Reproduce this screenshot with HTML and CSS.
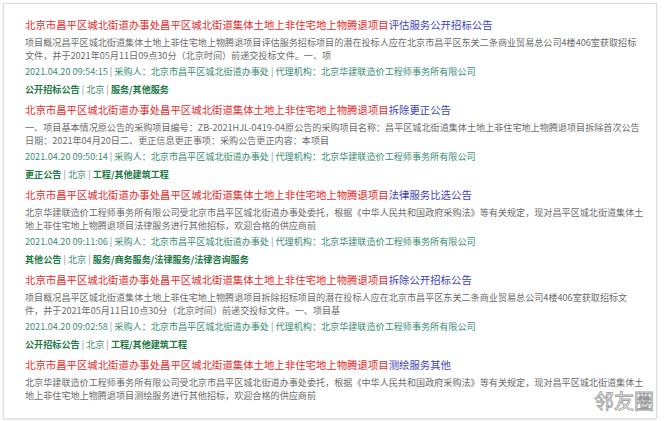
FILE: index.html
```html
<!DOCTYPE html>
<html lang="zh-CN">
<head>
    <meta charset="UTF-8">
    <meta name="viewport" content="width=device-width, initial-scale=1.0">
    <title>招标公告列表</title>
    <link rel="stylesheet" href="styles.css">
</head>
<body>
    <div class="card">
        <!-- 公告 1 -->
        <div class="notice">
            <div class="notice-title"><span class="hl">北京市昌平区城北街道办事处昌平区城北街道集体土地上非住宅地上物腾退项目</span>评估服务公开招标公告</div>
            <div class="notice-desc">项目概况昌平区城北街道集体土地上非住宅地上物腾退项目评估服务招标项目的潜在投标人应在北京市昌平区东关二条商业贸易总公司4楼406室获取招标文件，并于2021年05月11日09点30分（北京时间）前递交投标文件。一、项</div>
            <div class="notice-meta">2021.04.20 09:54:15 <span class="sep">|</span> 采购人：北京市昌平区城北街道办事处 <span class="sep">|</span> 代理机构：北京华建联造价工程师事务所有限公司</div>
            <div class="notice-tags"><b>公开招标公告</b> <span class="sep">|</span> 北京 <span class="sep">|</span> <b>服务/其他服务</b></div>
        </div>

        <!-- 公告 2 -->
        <div class="notice">
            <div class="notice-title"><span class="hl">北京市昌平区城北街道办事处昌平区城北街道集体土地上非住宅地上物腾退项目</span>拆除更正公告</div>
            <div class="notice-desc">一、项目基本情况原公告的采购项目编号：ZB-2021HJL-0419-04原公告的采购项目名称：昌平区城北街道集体土地上非住宅地上物腾退项目拆除首次公告日期：2021年04月20日二、更正信息更正事项：采购公告更正内容：本项目</div>
            <div class="notice-meta">2021.04.20 09:50:14 <span class="sep">|</span> 采购人：北京市昌平区城北街道办事处 <span class="sep">|</span> 代理机构：北京华建联造价工程师事务所有限公司</div>
            <div class="notice-tags"><b>更正公告</b> <span class="sep">|</span> 北京 <span class="sep">|</span> <b>工程/其他建筑工程</b></div>
        </div>

        <!-- 公告 3 -->
        <div class="notice">
            <div class="notice-title"><span class="hl">北京市昌平区城北街道办事处昌平区城北街道集体土地上非住宅地上物腾退项目</span>法律服务比选公告</div>
            <div class="notice-desc">北京华建联造价工程师事务所有限公司受北京市昌平区城北街道办事处委托，根据《中华人民共和国政府采购法》等有关规定，现对昌平区城北街道集体土地上非住宅地上物腾退项目法律服务进行其他招标，欢迎合格的供应商前</div>
            <div class="notice-meta">2021.04.20 09:11:06 <span class="sep">|</span> 采购人：北京市昌平区城北街道办事处 <span class="sep">|</span> 代理机构：北京华建联造价工程师事务所有限公司</div>
            <div class="notice-tags"><b>其他公告</b> <span class="sep">|</span> 北京 <span class="sep">|</span> <b>服务/商务服务/法律服务/法律咨询服务</b></div>
        </div>

        <!-- 公告 4 -->
        <div class="notice">
            <div class="notice-title"><span class="hl">北京市昌平区城北街道办事处昌平区城北街道集体土地上非住宅地上物腾退项目</span>拆除公开招标公告</div>
            <div class="notice-desc">项目概况昌平区城北街道集体土地上非住宅地上物腾退项目拆除招标项目的潜在投标人应在北京市昌平区东关二条商业贸易总公司4楼406室获取招标文件，并于2021年05月11日10点30分（北京时间）前递交投标文件。一、项目基</div>
            <div class="notice-meta">2021.04.20 09:02:58 <span class="sep">|</span> 采购人：北京市昌平区城北街道办事处 <span class="sep">|</span> 代理机构：北京华建联造价工程师事务所有限公司</div>
            <div class="notice-tags"><b>公开招标公告</b> <span class="sep">|</span> 北京 <span class="sep">|</span> <b>工程/其他建筑工程</b></div>
        </div>

        <!-- 公告 5 -->
        <div class="notice">
            <div class="notice-title"><span class="hl">北京市昌平区城北街道办事处昌平区城北街道集体土地上非住宅地上物腾退项目</span>测绘服务其他</div>
            <div class="notice-desc">北京华建联造价工程师事务所有限公司受北京市昌平区城北街道办事处委托，根据《中华人民共和国政府采购法》等有关规定，现对昌平区城北街道集体土地上非住宅地上物腾退项目测绘服务进行其他招标，欢迎合格的供应商前</div>
        </div>
    </div>

    <div class="watermark">邻友圈</div>
</body>
</html>
```

FILE: styles.css
```css
body {
    font-family: "Noto Sans CJK SC", "Noto Sans", sans-serif;
    background-color: #fff;
    margin: 0;
    padding: 3px;
}

.card {
    width: 620px;
    padding: 13px 11px 11px 21px;
    border: 1px solid #ddd;
    box-shadow: 0 1px 4px rgba(0, 0, 0, 0.12);
    background-color: #fff;
}

.notice {
    margin-bottom: 6px;
}

.notice-title {
    font-size: 10.4px;
    line-height: 16px;
    color: #3f3fb8;
    white-space: nowrap;
}

.notice-title .hl {
    color: #e52a2a;
}

.notice-desc {
    margin-top: 3px;
    font-size: 9.1px;
    line-height: 12.5px;
    color: #6b6b6b;
}

.notice-meta {
    margin-top: 3px;
    font-size: 9.1px;
    line-height: 14px;
    color: #3a8d6f;
}

.notice-tags {
    margin-top: 4px;
    font-size: 9.1px;
    line-height: 14px;
    color: #3a8d6f;
}

.notice-tags b {
    color: #1f7a46;
}

.sep {
    color: #8a8a8a;
}

/* 右下角水印 */
.watermark {
    position: absolute;
    left: 594px;
    top: 390px;
    font-family: "Noto Sans CJK SC", sans-serif;
    font-size: 20px;
    line-height: 21px;
    color: #fff;
    -webkit-text-stroke: 0.8px #999;
}
```
